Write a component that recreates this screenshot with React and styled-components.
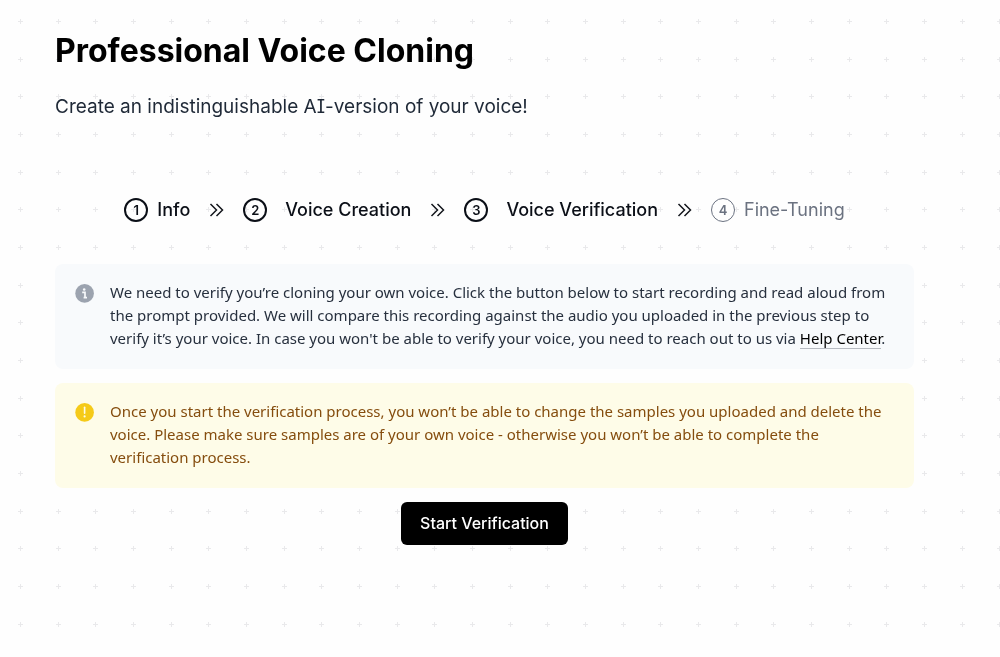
import React from "react";
import styled, { createGlobalStyle } from "styled-components";

const GlobalStyle = createGlobalStyle`
  *, *::before, *::after { box-sizing: border-box; }
  body {
    margin: 0;
    background: #fefefe;
    color: #000;
    font-family: Inter, "Liberation Sans", sans-serif;
  }
`;

const Backdrop = styled.svg`
  position: fixed;
  inset: 0;
  z-index: -1;
  width: 100%;
  height: 100%;
`;

const Page = styled.main`
  padding: 29px 86px 40px 55px;
`;

const Title = styled.h1`
  margin: 0;
  font-size: 32px;
  line-height: 44px;
  font-weight: 700;
`;

const Subtitle = styled.p`
  margin: 20px 0 0;
  color: #1f2937;
  font-size: 19px;
  line-height: 28px;
  font-feature-settings: "cv08";
`;

const Steps = styled.ol`
  display: flex;
  align-items: center;
  justify-content: center;
  gap: 19px;
  margin: 73px 0 0;
  padding: 0;
  list-style: none;
`;

const Step = styled.li`
  display: flex;
  align-items: center;
  gap: ${(p) => (p.$wide ? 18 : 9)}px;
  color: ${(p) => (p.$upcoming ? "#6b7280" : "#0b0f17")};
  font-size: 18px;
  line-height: 32px;
  font-weight: ${(p) => (p.$upcoming ? 400 : 500)};
  white-space: nowrap;
`;

const StepNumber = styled.span`
  display: flex;
  align-items: center;
  justify-content: center;
  width: 24px;
  height: 24px;
  border: ${(p) => (p.$upcoming ? 1 : 2)}px solid currentColor;
  border-radius: 50%;
  font-size: 13px;
  line-height: 20px;
  font-weight: 600;
`;

const Chevrons = styled.svg`
  display: block;
  width: 15px;
  height: 14px;
  fill: none;
  stroke: #14171d;
  stroke-width: 1.5;
`;

const Separator = styled.li`
  display: flex;
`;

const Notice = styled.section`
  display: flex;
  align-items: flex-start;
  gap: 15px;
  margin-top: ${(p) => (p.$first ? 38 : 14)}px;
  padding: 17px 20px 19px;
  border-radius: 8px;
  background: ${(p) => (p.$warning ? "#fefce8" : "#f8fafc")};
  color: ${(p) => (p.$warning ? "#854d0e" : "#27303e")};
`;

const NoticeIcon = styled.svg`
  flex: none;
  width: 20px;
  height: 20px;
  margin-top: 2px;
`;

const NoticeText = styled.p`
  margin: 0;
  font-family: "Noto Sans", sans-serif;
  font-size: 15px;
  line-height: 23px;
`;

const HelpLink = styled.a`
  box-shadow: 0 1px 0 #b6bac1;
  color: #000;
  text-decoration: none;
`;

const Actions = styled.div`
  display: flex;
  justify-content: center;
  margin-top: 14px;
`;

const PrimaryButton = styled.button`
  padding: 0 19px;
  border: 0;
  border-radius: 6px;
  background: #000;
  color: #fff;
  font-family: inherit;
  font-size: 16px;
  line-height: 43px;
  font-weight: 500;
  cursor: pointer;
`;

const steps = [
  { label: "Info" },
  { label: "Voice Creation", wide: true },
  { label: "Voice Verification", wide: true },
  { label: "Fine-Tuning", upcoming: true },
];

const marks = [20, 58, 95];

function PlusGrid() {
  return (
    <Backdrop aria-hidden="true">
      <defs>
        <pattern id="plus-grid" width="113" height="113" patternUnits="userSpaceOnUse">
          {marks.map((y) =>
            marks.map((x) => (
              <path
                key={`${x}-${y}`}
                d={`M${x - 2} ${y + 1.5}h5M${x + 0.5} ${y - 1}v5`}
                stroke="#e9e9eb"
                strokeWidth="1"
              />
            ))
          )}
        </pattern>
      </defs>
      <rect width="100%" height="100%" fill="url(#plus-grid)" />
    </Backdrop>
  );
}

function InfoIcon() {
  return (
    <NoticeIcon viewBox="0 0 20 20" aria-hidden="true">
      <circle cx="9.6" cy="10.4" r="9.3" fill="#9ca3af" />
      <circle cx="9.2" cy="6.5" r="1.3" fill="#f8fafc" />
      <path d="M7.2 9.4h2.8v5M8.6 14.6h3.4" fill="none" stroke="#f8fafc" strokeWidth="1.7" />
    </NoticeIcon>
  );
}

function WarningIcon() {
  return (
    <NoticeIcon viewBox="0 0 20 20" aria-hidden="true">
      <circle cx="9.6" cy="10.4" r="9.3" fill="#f5ca18" />
      <path d="M9.6 5.2v6" stroke="#fefce8" strokeWidth="1.6" strokeLinecap="round" />
      <circle cx="9.6" cy="14.4" r="1.1" fill="#fefce8" />
    </NoticeIcon>
  );
}

export default function App() {
  return (
    <>
      <GlobalStyle />
      <PlusGrid />
      <Page>
        <Title>Professional Voice Cloning</Title>
        <Subtitle>Create an indistinguishable AI-version of your voice!</Subtitle>
        <Steps>
          {steps.map((step, i) => (
            <React.Fragment key={step.label}>
              {i > 0 && (
                <Separator aria-hidden="true">
                  <Chevrons viewBox="0 0 15 14">
                    <path d="M1.5 1l6 6-6 6M7.5 1l6 6-6 6" />
                  </Chevrons>
                </Separator>
              )}
              <Step $wide={step.wide} $upcoming={step.upcoming}>
                <StepNumber $upcoming={step.upcoming}>{i + 1}</StepNumber>
                {step.label}
              </Step>
            </React.Fragment>
          ))}
        </Steps>
        <Notice $first>
          <InfoIcon />
          <NoticeText>
            We need to verify you’re cloning your own voice. Click the button below to start
            recording and read aloud from the prompt provided. We will compare this recording
            against the audio you uploaded in the previous step to verify it’s your voice. In case
            you won't be able to verify your voice, you need to reach out to us via{" "}
            <HelpLink href="#help">Help Center</HelpLink>.
          </NoticeText>
        </Notice>
        <Notice $warning>
          <WarningIcon />
          <NoticeText>
            Once you start the verification process, you won’t be able to change the samples you
            uploaded and delete the voice. Please make sure samples are of your own voice -
            otherwise you won’t be able to complete the verification process.
          </NoticeText>
        </Notice>
        <Actions>
          <PrimaryButton type="button">Start Verification</PrimaryButton>
        </Actions>
      </Page>
    </>
  );
}
